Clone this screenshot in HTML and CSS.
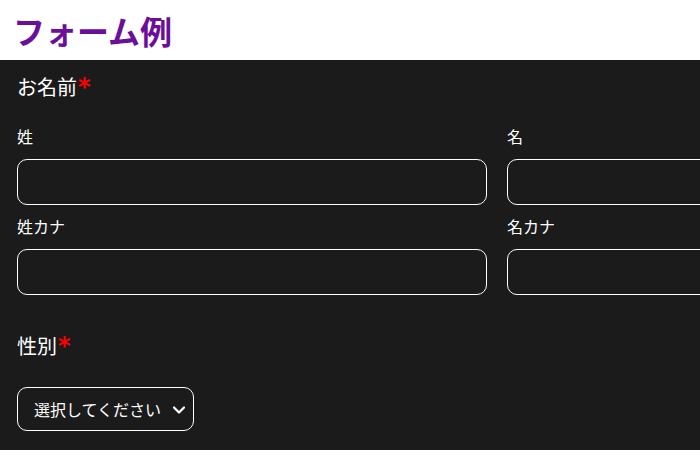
FILE: index.html
```html
<!DOCTYPE html>
<html lang="ja">
<head>
<meta charset="utf-8">
<title>フォーム例</title>
<link rel="stylesheet" href="styles.css">
</head>
<body>
<header class="page-header">
  <h1 class="page-title">フォーム例</h1>
</header>
<main class="form-area">
  <fieldset class="group">
    <legend class="group-title">お名前<span class="req">*</span></legend>
    <div class="grid">
      <div class="field">
        <label class="field-label" for="sei">姓</label>
        <input class="text-input" id="sei" type="text">
      </div>
      <div class="field">
        <label class="field-label" for="mei">名</label>
        <input class="text-input" id="mei" type="text">
      </div>
      <div class="field">
        <label class="field-label" for="seikana">姓カナ</label>
        <input class="text-input" id="seikana" type="text">
      </div>
      <div class="field">
        <label class="field-label" for="meikana">名カナ</label>
        <input class="text-input" id="meikana" type="text">
      </div>
    </div>
  </fieldset>
  <div class="group gender">
    <div class="group-title">性別<span class="req">*</span></div>
    <div class="select-wrap">
      <select class="select">
        <option>選択してください</option>
        <option>男性</option>
        <option>女性</option>
      </select>
      <svg class="chevron" viewBox="0 0 12 8" width="12" height="8"><path d="M1 1.5 L6 6.5 L11 1.5" fill="none" stroke="#fff" stroke-width="2.2" stroke-linecap="round" stroke-linejoin="round"/></svg>
    </div>
  </div>
</main>
</body>
</html>
```

FILE: styles.css
```css
html, body {
  margin: 0;
  padding: 0;
  height: 100%;
  overflow: hidden;
  background: #1b1b1b;
  font-family: "Noto Sans CJK JP", "Noto Sans", sans-serif;
  color: #ffffff;
}

.page-header {
  background: #ffffff;
  height: 60px;
  display: flex;
  align-items: center;
  padding-left: 13px;
}

.page-title {
  margin: 0;
  font-size: 32px;
  font-weight: 700;
  color: #6b0f9a;
  line-height: 1;
}

.form-area {
  background: #1b1b1b;
  padding: 14px 17px 0;
  min-height: 100%;
}

.group {
  border: 0;
  margin: 0;
  padding: 0;
  min-width: 0;
}

.group-title {
  padding: 0;
  font-size: 20px;
  line-height: 26px;
  color: #ffffff;
}

.req {
  color: #ff0000;
  font-family: "DejaVu Sans", sans-serif;
  font-size: 24px;
  font-weight: 700;
  margin-left: 1px;
  line-height: 1;
}

.grid {
  display: grid;
  grid-template-columns: 470px 470px;
  column-gap: 20px;
  padding-top: 25px;
  row-gap: 10px;
}

.field {
  display: flex;
  flex-direction: column;
  gap: 11px;
}

.field-label {
  font-size: 16px;
  line-height: 23px;
}

.text-input {
  box-sizing: border-box;
  height: 46px;
  width: 100%;
  background: #1b1b1b;
  border: 1px solid #ffffff;
  border-radius: 10px;
  color: #fff;
  font-size: 15px;
  padding: 0 12px;
}

.gender {
  margin-top: 38px;
}

.gender .group-title {
  margin-bottom: 28px;
}

.select-wrap {
  position: relative;
  display: inline-block;
}

.select {
  appearance: none;
  -webkit-appearance: none;
  box-sizing: border-box;
  height: 44px;
  width: 177px;
  background: #1b1b1b;
  border: 1px solid #ffffff;
  border-radius: 10px;
  color: #ffffff;
  font-family: "Noto Sans CJK JP", "Noto Sans", sans-serif;
  font-size: 16px;
  padding: 0 28px 0 16px;
}

.chevron {
  position: absolute;
  right: 9px;
  top: 19px;
  pointer-events: none;
}
```
